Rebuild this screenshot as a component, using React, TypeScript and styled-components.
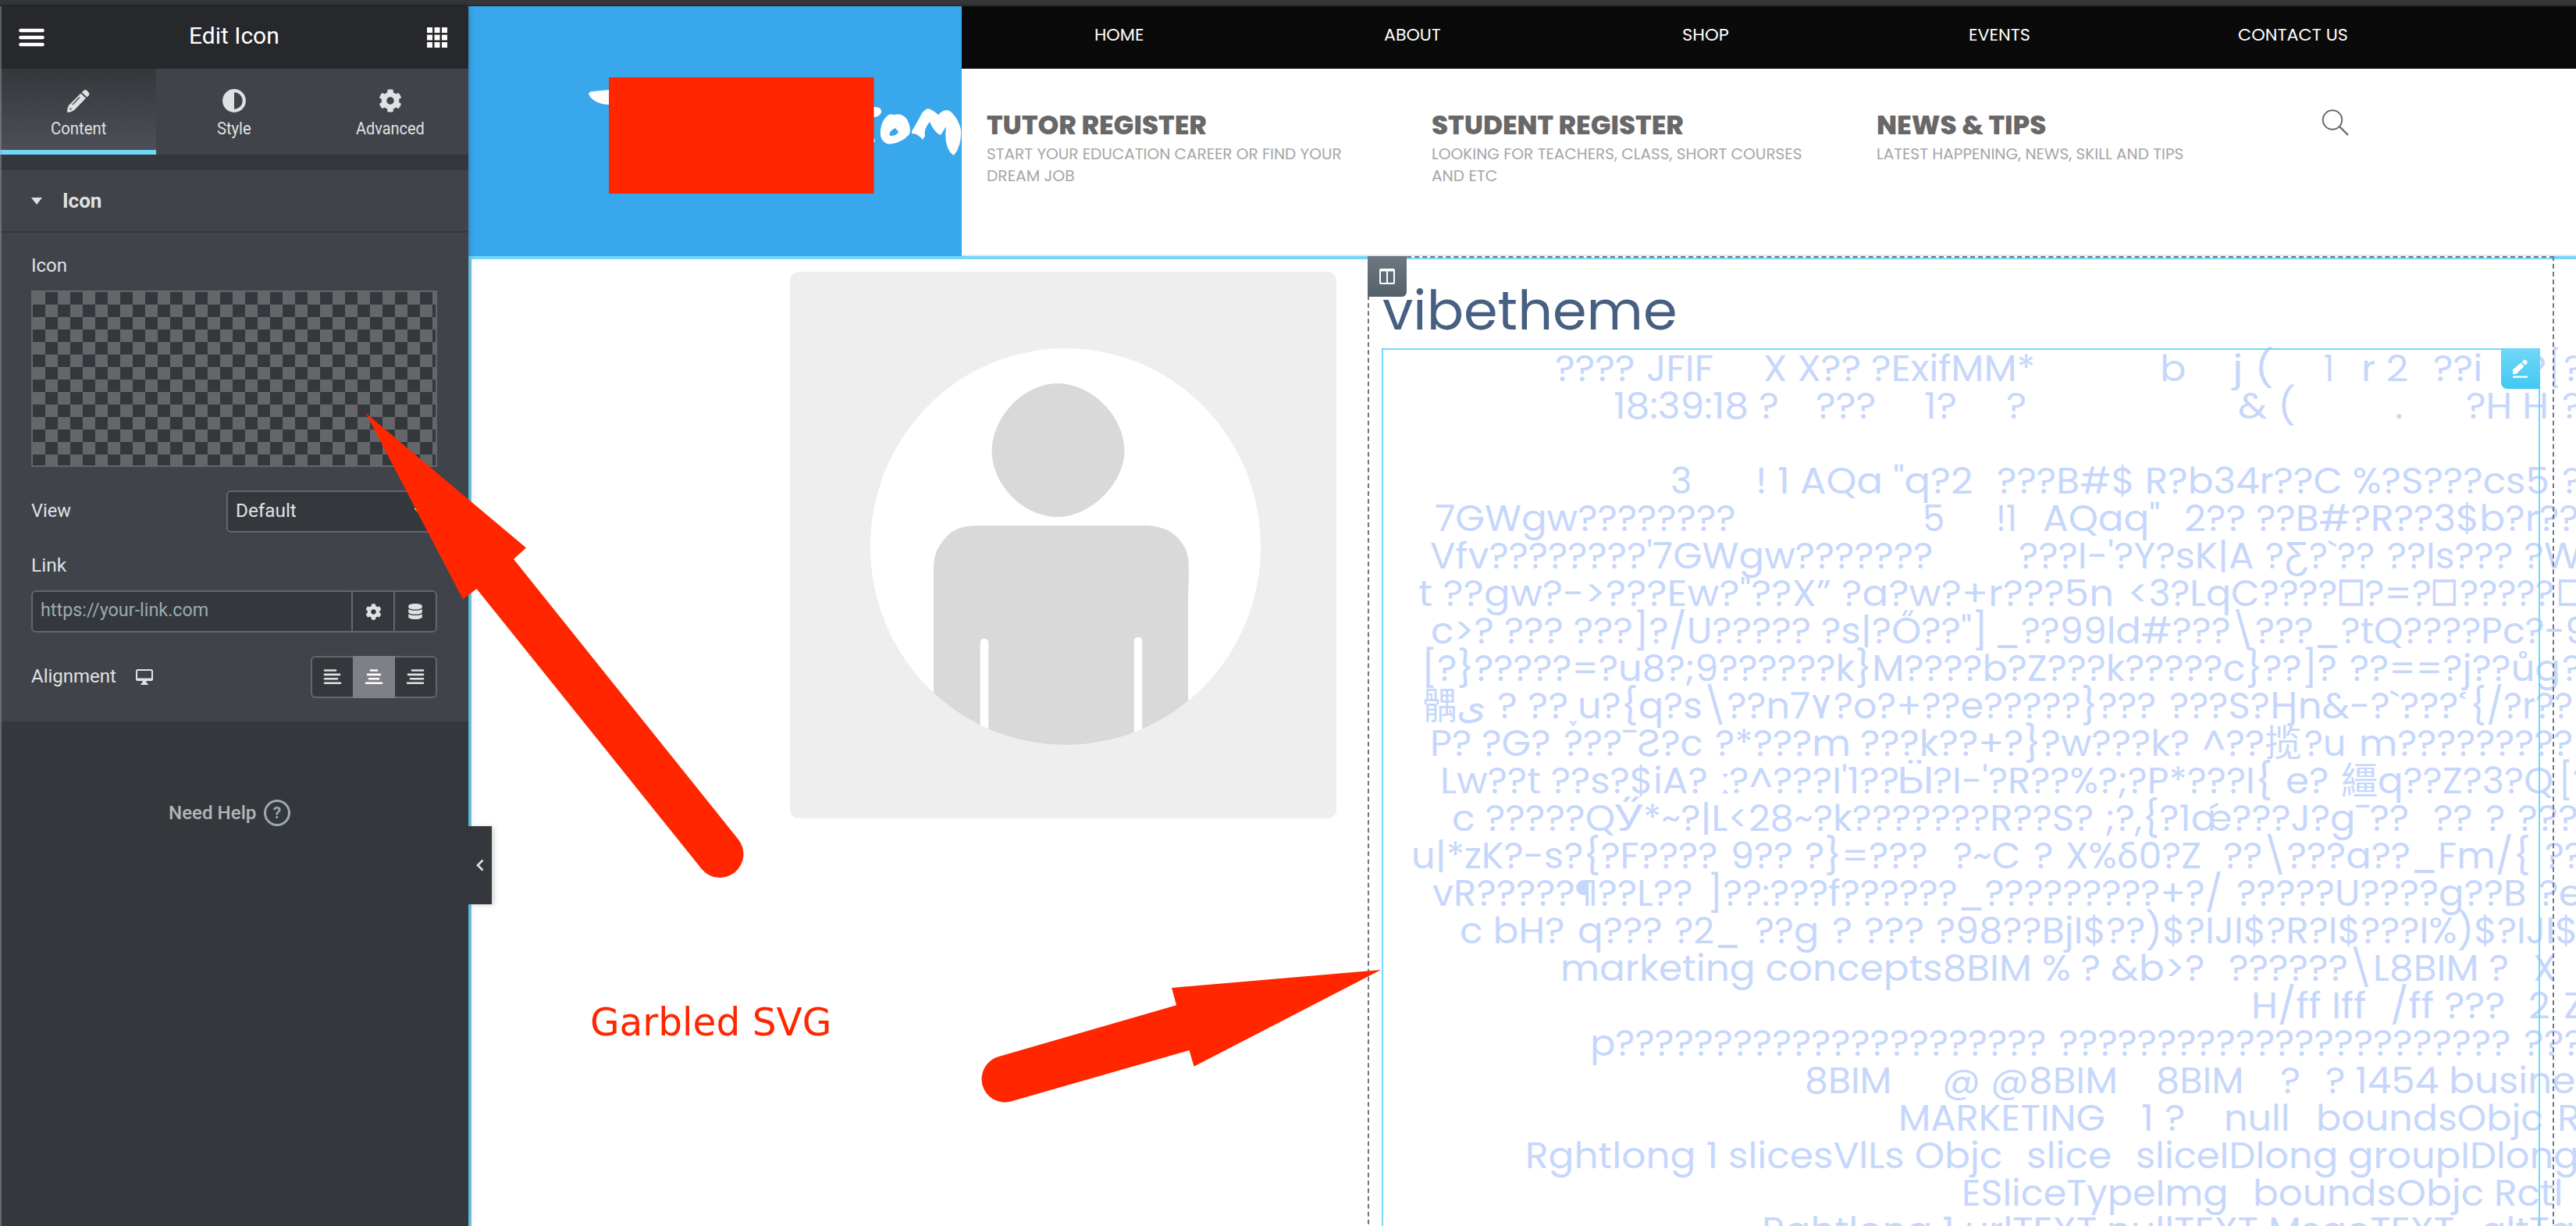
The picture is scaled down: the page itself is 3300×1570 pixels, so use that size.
import React, { useLayoutEffect, useRef, useState } from "react";
import styled, { createGlobalStyle } from "styled-components";
import { FaCog, FaDatabase } from "react-icons/fa";

const GEO = `Poppins, Inter, "Noto Sans", "Noto Sans CJK SC", sans-serif`;
const UI = `Roboto, "Liberation Sans", sans-serif`;

const Global = createGlobalStyle`
  * { box-sizing: border-box; }
  body { margin: 0; background: #fff; }
`;

/* ---------- width-fitted text ---------- */

const FitBox = styled.span<{ $w: number }>`
  display: block;
  flex: none;
  width: ${(p) => p.$w}px;
  white-space: pre;
`;
const FitInner = styled.span`
  display: inline-block;
  transform-origin: 0 50%;
`;

function Fit({ w, children, className }: { w: number; children: string; className?: string }) {
  const ref = useRef<HTMLSpanElement>(null);
  const [scale, setScale] = useState(1);
  useLayoutEffect(() => {
    if (ref.current) setScale(w / ref.current.offsetWidth);
  }, [w, children]);
  return (
    <FitBox $w={w} className={className}>
      <FitInner ref={ref} style={{ transform: `scaleX(${scale})` }}>
        {children}
      </FitInner>
    </FitBox>
  );
}

/* ---------- shell ---------- */

const Page = styled.div`
  position: relative;
  display: flex;
  flex-direction: column;
  width: 3300px;
  height: 1570px;
  overflow: hidden;
`;
const BrowserEdge = styled.div`
  flex: none;
  height: 8px;
  background: #35363a;
  border-bottom: 2px solid #292a2a;
`;
const Body = styled.div`
  display: flex;
  flex: 1;
  min-height: 0;
`;

/* ---------- sidebar ---------- */

const Panel = styled.aside`
  position: relative;
  z-index: 2;
  flex: none;
  width: 600px;
  background: #34383c;
  font-family: ${UI};
  color: #e0e1e3;
  box-shadow: 0 0 8px rgba(0, 0, 0, 0.3);
  &::after {
    content: "";
    position: absolute;
    inset: 0 auto 0 0;
    width: 2px;
    background: rgba(160, 162, 165, 0.45);
  }
`;
const PanelHeader = styled.header`
  display: flex;
  align-items: center;
  justify-content: space-between;
  height: 80px;
  padding: 0 27px 0 24px;
  background: #26282b;
  color: #fff;
  font-size: 30px;
  font-weight: 400;
`;
const HeaderTitle = styled(Fit)`
  line-height: 36px;
  padding-bottom: 4px;
  margin: 0 4px 0 0;
`;
const Tabs = styled.nav`
  display: grid;
  grid-template-columns: repeat(3, 1fr);
  height: 110px;
  margin-bottom: 20px;
`;
const Tab = styled.div<{ $active?: boolean }>`
  display: flex;
  flex-direction: column;
  align-items: center;
  gap: 7px;
  padding-top: 26px;
  font-size: 21.5px;
  line-height: 28px;
  font-weight: 400;
  background: ${(p) => (p.$active ? "linear-gradient(#34383c, #404349 50%, #4c4f57)" : "#404349")};
  border-bottom: 6px solid ${(p) => (p.$active ? "#71d7f7" : "#404349")};
  svg { display: block; }
`;
const SectionTitle = styled.div`
  display: flex;
  align-items: center;
  gap: 26px;
  height: 80px;
  padding: 0 40px;
  background: #404349;
  border-bottom: 2px solid #34383c;
  font-size: 26px;
  font-weight: 700;
`;
const Caret = styled.i`
  border: 7.5px solid transparent;
  border-top: 9px solid #e0e1e3;
  border-bottom: 0;
`;
const Controls = styled.div`
  height: 626px;
  padding: 26px 40px 0;
  background: #404349;
  font-size: 24px;
`;
const Label = styled.div`
  display: flex;
  align-items: center;
  gap: 25px;
  height: 32px;
`;
const Checker = styled.div`
  height: 226px;
  margin-top: 16px;
  border: 2px solid #64666a;
  background: conic-gradient(#34383c 25%, #64666a 0 50%, #34383c 0 75%, #64666a 0) 0 0 / 32px 32px;
`;
const Row = styled.div<{ $top: number }>`
  display: flex;
  align-items: center;
  justify-content: space-between;
  height: 54px;
  margin-top: ${(p) => p.$top}px;
`;
const RowText = styled(Fit)`
  padding-bottom: 2px;
`;
const Select = styled.div`
  display: flex;
  align-items: center;
  justify-content: space-between;
  width: 270px;
  height: 54px;
  padding: 0 12px 3px 10px;
  background: #34383c;
  border: 2px solid #64666a;
  border-radius: 6px;
`;
const LinkLabel = styled(Label)`
  margin: 26px 0 16px;
`;
const Segmented = styled.div`
  display: flex;
  height: 54px;
  background: #34383c;
  border: 2px solid #64666a;
  border-radius: 6px;
`;
const UrlText = styled.div`
  flex: 1;
  padding: 9px 0 0 10px;
  color: #9da9b3;
  line-height: 28px;
`;
const IconCell = styled.div<{ $plain?: boolean; $active?: boolean }>`
  display: flex;
  align-items: center;
  justify-content: center;
  width: ${(p) => (p.$plain ? 52 : 54)}px;
  margin: ${(p) => (p.$active ? "-2px 0" : "0")};
  border-left: ${(p) => (p.$plain || p.$active ? 0 : 2)}px solid #64666a;
  background: ${(p) => (p.$active ? "#7e8085" : "transparent")};
  color: ${(p) => (p.$active ? "#fff" : "#e0e1e3")};
`;
const Help = styled.div`
  display: flex;
  align-items: center;
  gap: 10px;
  margin: 100px 0 0 216px;
  font-size: 23.5px;
  font-weight: 500;
  color: #b4b5b7;
`;
const HelpMark = styled.span`
  display: flex;
  align-items: center;
  justify-content: center;
  width: 34px;
  height: 34px;
  border: 3px solid #9da9b1;
  border-radius: 50%;
  color: #9da9b1;
  font-size: 21px;
  font-weight: 700;
`;
const Collapse = styled.div`
  position: absolute;
  left: 600px;
  top: 1050px;
  display: flex;
  align-items: center;
  justify-content: center;
  width: 30px;
  height: 100px;
  background: #34383c;
  box-shadow: 3px 1px 6px rgba(0, 0, 0, 0.18);
`;

const ALIGN = {
  left: [[0, 16], [0, 21], [0, 18], [0, 22]],
  center: [[6, 16], [2, 20], [4, 18], [0, 22]],
  right: [[6, 22], [1, 22], [4, 22], [0, 22]],
};
const AlignIcon = ({ kind }: { kind: keyof typeof ALIGN }) => (
  <svg width="24" height="22" viewBox="-1 0 24 22" stroke="currentColor" strokeWidth="2.6" strokeLinecap="round">
    {ALIGN[kind].map(([a, b], i) => (
      <path key={i} d={`M${a + 1} ${2.5 + i * 5.4}H${b - 1}`} />
    ))}
  </svg>
);

function Sidebar() {
  return (
    <Panel>
      <PanelHeader>
        <svg width="33" height="24" stroke="#fff" strokeWidth="4.6" strokeLinecap="round">
          <path d="M2.5 3H30.5M2.5 12H30.5M2.5 21H30.5" />
        </svg>
        <HeaderTitle w={116}>Edit Icon</HeaderTitle>
        <svg width="26" height="26" fill="#fff">
          {[0, 9.5, 19].map((y) => [0, 9.5, 19].map((x) => <rect key={`${x}-${y}`} x={x} y={y} width="7" height="7" />))}
        </svg>
      </PanelHeader>
      <Tabs>
        <Tab $active>
          <svg width="30" height="30" viewBox="0 0 30 30" fill="#e0e1e3">
            <path d="M18.5 5.5 25 11.8 10 27.2Q6 29.6 1 30 .6 25 3 21z" />
            <path d="M19.8 4.3 22 2Q24.3 0 26.5 2L28.5 4.2Q30.2 6.3 28.5 8.500L26.3 10.6z" />
            <path d="M8 20 17 10.5M4.5 24.5 6.5 26.5" stroke="#3d4046" strokeWidth="1.3" />
          </svg>
          <Fit w={71}>Content</Fit>
        </Tab>
        <Tab>
          <svg width="30" height="30" viewBox="0 0 30 30">
            <circle cx="15" cy="15" r="12.8" fill="none" stroke="#e0e1e3" strokeWidth="4.2" />
            <path d="M15 1A14 14 0 0 0 15 29z" fill="#e0e1e3" />
          </svg>
          <Fit w={44}>Style</Fit>
        </Tab>
        <Tab>
          <FaCog size={30} />
          <Fit w={88}>Advanced</Fit>
        </Tab>
      </Tabs>
      <SectionTitle>
        <Caret />
        <Fit w={50}>Icon</Fit>
      </SectionTitle>
      <Controls>
        <Label>
          <Fit w={46}>Icon</Fit>
        </Label>
        <Checker />
        <Row $top={30}>
          <RowText w={51}>View</RowText>
          <Select>
            <Fit w={78}>Default</Fit>
            <svg width="16" height="10" fill="none" stroke="#e0e1e3" strokeWidth="2.5">
              <path d="M1.5 1.5 8 8 14.5 1.5" />
            </svg>
          </Select>
        </Row>
        <LinkLabel>
          <Fit w={45}>Link</Fit>
        </LinkLabel>
        <Segmented>
          <UrlText>
            <Fit w={215}>https://your-link.com</Fit>
          </UrlText>
          <IconCell>
            <FaCog size={21} />
          </IconCell>
          <IconCell>
            <FaDatabase size={20} />
          </IconCell>
        </Segmented>
        <Row $top={30}>
          <Label>
            <RowText w={109}>Alignment</RowText>
            <svg width="22" height="22" viewBox="0 0 22 22" fill="none" stroke="#e0e1e3" strokeWidth="2">
              <rect x="1" y="2" width="20" height="13" rx="1.5" />
              <path d="M1 14H21" strokeWidth="3" />
              <path d="M9 15h4l1 4h1.5v2h-9v-2H8z" fill="#e0e1e3" stroke="none" />
            </svg>
          </Label>
          <Segmented>
            <IconCell $plain>
              <AlignIcon kind="left" />
            </IconCell>
            <IconCell $active>
              <AlignIcon kind="center" />
            </IconCell>
            <IconCell $plain>
              <AlignIcon kind="right" />
            </IconCell>
          </Segmented>
        </Row>
      </Controls>
      <Help>
        <Fit w={112}>Need Help</Fit>
        <HelpMark>?</HelpMark>
      </Help>
      <Collapse>
        <svg width="10" height="16" fill="none" stroke="#e0e1e3" strokeWidth="2.6">
          <path d="M8.5 1.5 2 8 8.5 14.5" />
        </svg>
      </Collapse>
    </Panel>
  );
}

/* ---------- site header ---------- */

const Preview = styled.main`
  flex: 1;
  min-width: 0;
  font-family: ${GEO};
  font-feature-settings: "cv11", "calt" 0;
`;
const SiteHeader = styled.header`
  display: flex;
  height: 320px;
`;
const Logo = styled.div`
  flex: none;
  width: 632px;
  background: #38a7eb;
  svg { display: block; }
`;
const HeaderMain = styled.div`
  flex: 1;
  border-bottom: 2px solid #e8e9ef;
`;
const MainNav = styled.nav`
  display: grid;
  grid-template-columns: repeat(5, 376px);
  justify-items: center;
  height: 80px;
  padding: 20px 0 0 13px;
  background: #0a0a0a;
  color: #fff;
  font-size: 21.5px;
  line-height: 34px;
`;
const Promos = styled.div`
  display: grid;
  grid-template-columns: repeat(3, 570px) 1fr;
  padding: 51px 0 0 32px;
`;
const Promo = styled.div`
  padding-top: 1px;
  font-size: 19px;
  line-height: 28px;
  color: #a6a6a6;
`;
const PromoTitle = styled(Fit)`
  font-size: 33.5px;
  line-height: 42px;
  font-weight: 800;
  color: #686868;
  margin-bottom: 2px;
`;

const NAV: [string, number][] = [
  ["HOME", 63],
  ["ABOUT", 73],
  ["SHOP", 60],
  ["EVENTS", 79],
  ["CONTACT US", 141],
];
const PROMOS: { title: [string, number]; lines: [string, number][] }[] = [
  { title: ["TUTOR REGISTER", 282], lines: [["START YOUR EDUCATION CAREER OR FIND YOUR", 455], ["DREAM JOB", 113]] },
  { title: ["STUDENT REGISTER", 323], lines: [["LOOKING FOR TEACHERS, CLASS, SHORT COURSES", 474], ["AND ETC", 84]] },
  { title: ["NEWS & TIPS", 218], lines: [["LATEST HAPPENING, NEWS, SKILL AND TIPS", 393]] },
];

/* ---------- page section ---------- */

const Section = styled.section`
  display: flex;
  gap: 40px;
  height: 1242px;
  padding-left: 408px;
  border-top: 4px solid #73d7f7;
  border-left: 4px solid #6fd0f0;
`;
const Avatar = styled.div`
  flex: none;
  width: 700px;
  height: 700px;
  margin-top: 16px;
  background: #eeeeee;
  border-radius: 11px;
  overflow: hidden;
  svg { display: block; }
`;
const Column = styled.div`
  position: relative;
  flex: none;
  width: 1520px;
  height: 1300px;
  margin-top: -4px;
  padding: 2px 18px 0;
  background: linear-gradient(#fff 0 2px, #73d7f7 2px 4px, transparent 4px);
  &::after {
    content: "";
    position: absolute;
    inset: 0;
    border: 2px dashed #6d7882;
  }
`;
const ColumnHandle = styled.div`
  position: absolute;
  left: 0;
  top: 0;
  z-index: 1;
  display: flex;
  align-items: center;
  justify-content: center;
  width: 50px;
  height: 52px;
  background: linear-gradient(#6d7882, #556068);
  border-bottom-right-radius: 6px;
`;
const Heading = styled.h2`
  position: relative;
  z-index: 2;
  height: 116px;
  margin: 0;
  padding: 33px 0 0 1px;
  color: #475f80;
  font-size: 70px;
  line-height: 70px;
  font-weight: 400;
`;
const Widget = styled.div`
  position: relative;
  height: 1300px;
  padding: 2px 2px 0;
  &::after {
    content: "";
    position: absolute;
    inset: 0;
    border: 2px solid #73d7f7;
  }
`;
const EditButton = styled.div`
  position: absolute;
  top: 0;
  right: 0;
  z-index: 1;
  display: flex;
  align-items: center;
  justify-content: center;
  width: 50px;
  height: 52px;
  background: linear-gradient(#71d7f7, #42c8f2);
  border-bottom-left-radius: 8px;
`;
const GarbledLine = styled.div`
  display: flex;
  height: 48px;
  direction: ltr;
  unicode-bidi: bidi-override;
  font-size: 46.5px;
  line-height: 48px;
  color: #c6d7fb;
`;
const Gap = styled.i<{ $w: number }>`
  flex: none;
  width: ${(p) => Math.max(p.$w, 0)}px;
  margin-right: ${(p) => Math.min(p.$w, 0)}px;
`;

/* Each run is [left edge, right edge, text] on the page's horizontal axis. */
type Run = [number, number, string];
const ORIGIN = 1772;
const BEARING = 2;
const LINES: Run[][] = [
  [[1994, 2092, "????"], [2111, 2193, "JFIF"], [2261, 2605, "X X?? ?ExifMM*"], [2769, 2798, "b"], [2862, 2911, "j ("], [2979, 2988, "1"], [3027, 3084, "r 2"], [3119, 3178, "??i"], [3237, 3260, "?"], [3269, 3278, "["], [3286, 3308, "?"]],
  [[2069, 2277, "18:39:18 ?"], [2328, 2401, "???"], [2467, 2505, "1?"], [2572, 2594, "?"], [2869, 2939, "& ("], [3070, 3077, "."], [3161, 3263, "?H H"], [3284, 3306, "?"]],
  [],
  [[2142, 2165, "3"], [2251, 2526, "! 1 AQa \"q?2"], [2560, 3264, "???B#$ R?b34r??C %?S???cs5"], [3284, 3306, "?"]],
  [[1840, 2221, "7GWgw????????"], [2465, 2489, "5"], [2559, 2582, "!1"], [2619, 2765, "AQaq\""], [2800, 3302, "2?? ??B#?R??3$b?r??"]],
  [[1834, 2474, "Vfv????????'7GWgw???????"], [2588, 2885, "???I-'?Y?sK|A"], [2904, 3040, "?Ƹ?`??"], [3060, 3218, "??Is???"], [3235, 3306, "?W"]],
  [[1819, 2706, "t ??gw?->???Ew?\"??X” ?a?w?+r???5n"], [2728, 2992, "<3?LqC????"], [2995, 3029, "□"], [3031, 3113, "?=?"], [3115, 3148, "□"], [3153, 3270, "?????"], [3276, 3310, "□"]],
  [[1835, 2545, "c>? ??? ???]?/U????? ?s|?Ő??\"]"], [2556, 3314, "_??99ld#???\\???_?tQ????Pc?-9"]],
  [[1823, 2992, "[?}?????=?u8?;9??????k}M????b?Z???k?????c}??]?"], [3012, 3278, "??==?j??ůg"], [3284, 3306, "?"]],
  [[1824, 1865, "髃"], [1868, 1902, "ى"], [1920, 2008, "? ??"], [2010, 2020, "ˬ"], [2023, 2317, "u?{q?s\\??n7"], [2322, 2344, "٧"], [2351, 2760, "?o?+??e?????}???"], [2781, 3147, "???S?Ӈn&-?`???"], [3150, 3159, "ʿ"], [3166, 3294, "{/?r??"]],
  [[1834, 1985, "P? ?G?"], [2005, 2180, "???ˉƧ?c"], [2199, 2369, "?*???m"], [2385, 2803, "???k??+?}?w???k?"], [2823, 2899, "^??"], [2903, 2947, "揽"], [2954, 3003, "?u"], [3024, 3294, "m?????????"]],
  [[1847, 2186, "Lw??t ??s?$iA?"], [2205, 2216, "ː"], [2217, 2431, "?^???I'1??"], [2432, 2476, "Ӹ"], [2478, 2909, "?I-'?R??%?;?P*???I{"], [2930, 2981, "e?"], [3001, 3045, "繮"], [3048, 3269, "q??Z?3?Q"], [3280, 3316, "[?"]],
  [[1862, 2067, "c ?????Q"], [2069, 2104, "Ӳ"], [2107, 2680, "*~?|L<28~?k???????R??S?"], [2699, 3084, ";?,{?1ǽ???J?gˉ??"], [3119, 3166, "??"], [3186, 3207, "?"], [3227, 3301, "???"]],
  [[1810, 2198, "u|*zK?-s?{?F????"], [2219, 2295, "9??"], [2314, 2468, "?}=???"], [2504, 2586, "?~C"], [2607, 2628, "?"], [2648, 2818, "X%δ0?Z"], [2850, 3240, "??\\???a??_Fm/{"], [3262, 3308, "??"]],
  [[1837, 2166, "vR?????¶??L??"], [2189, 2846, "]??:???f??????_?????????+?/"], [2867, 3234, "?????U????g??B"], [3254, 3306, "?e"]],
  [[1872, 2003, "c bH?"], [2023, 2128, "q???"], [2147, 2228, "?2_"], [2250, 2328, "??g"], [2349, 2371, "?"], [2390, 2463, "???"], [2482, 3301, "?98??BjI$??)$?IJI$?R?I$???I%)$?IJI$"]],
  [[2001, 2822, "marketing concepts8BIM % ? &b>?"], [2857, 3212, "??????\\L8BIM ?"], [3247, 3273, "X"]],
  [[2886, 3029, "H/ff Iff"], [3064, 3207, "/ff ???"], [3241, 3265, "2"], [3286, 3310, "Z"]],
  [[2039, 2620, "p??????????????????????"], [2639, 3214, "???????????????????????"], [3235, 3308, "???"]],
  [[2314, 2421, "8BIM"], [2490, 2711, "@ @8BIM"], [2764, 2872, "8BIM"], [2923, 2945, "?"], [2981, 3297, "? 1454 busine"]],
  [[2434, 2695, "MARKETING"], [2745, 2798, "1 ?"], [2851, 2931, "null"], [2969, 3256, "boundsObjc"], [3278, 3304, "R"]],
  [[1956, 2563, "Rghtlong 1 slicesVlLs Objc"], [2598, 2703, "slice"], [2738, 3302, "sliceIDlong groupIDlong"]],
  [[2515, 2852, "ESliceTypeImg"], [2888, 3281, "boundsObjc Rctl"]],
  [[2259, 3142, "Rghtlong 1 urlTEXT nullTEXT MsgeTEXT"], [3180, 3296, "altTa"]],
];

function Garbled({ runs }: { runs: Run[] }) {
  let cursor = ORIGIN;
  return (
    <GarbledLine>
      {runs.map(([from, to, text], i) => {
        const gap = from - BEARING - cursor;
        cursor = to + BEARING;
        return (
          <React.Fragment key={i}>
            <Gap $w={gap} />
            <Fit w={to - from + BEARING * 2}>{text}</Fit>
          </React.Fragment>
        );
      })}
    </GarbledLine>
  );
}

/* ---------- annotations ---------- */

const Notes = styled.div`
  position: absolute;
  inset: 0;
  z-index: 5;
  color: #ff2600;
  svg { display: block; }
`;
const NoteText = styled.div`
  position: absolute;
  left: 756px;
  top: 1280px;
  font-family: Verdana, "DejaVu Sans", sans-serif;
  font-size: 49px;
  line-height: 60px;
`;

export default function App() {
  return (
    <Page>
      <Global />
      <BrowserEdge />
      <Body>
        <Sidebar />
        <Preview>
          <SiteHeader>
            <Logo>
              <svg width="632" height="320" fill="#fff">
                <path d="M154 112Q155 109 160 109L181 107V126Q167 126 159 119Q155 116 154 112z" />
                <path d="M519 129Q530 128 529 136Q526 142 519 142zM519 169Q523 172 519 175z" />
                <path
                  fillRule="evenodd"
                  d="M536 141Q539 137 545 139Q556 136 562 145Q568 156 565 164Q556 174 543 176Q536 178 531 172Q527 168 528 158Q530 146 536 141zM547 156Q538 160 540 166Q549 166 551 161z"
                />
                <path d="M568 160Q576 147 581 137Q587 129 592 132Q598 135 602 139Q612 128 620 137Q628 145 631 158Q632 171 627 183L625 181Q628 184 626 185L622 191L617 187Q609 175 612 154L605 165Q597 162 591 148Q583 158 585 166L582 171Q575 162 568 163z" />
              </svg>
            </Logo>
            <HeaderMain>
              <MainNav>
                {NAV.map(([t, w]) => (
                  <Fit key={t} w={w}>{t}</Fit>
                ))}
              </MainNav>
              <Promos>
                {PROMOS.map((p) => (
                  <Promo key={p.title[0]}>
                    <PromoTitle w={p.title[1]}>{p.title[0]}</PromoTitle>
                    {p.lines.map(([t, w]) => (
                      <Fit key={t} w={w}>{t}</Fit>
                    ))}
                  </Promo>
                ))}
                <svg width="36" height="36" viewBox="-1 -1 36 36" fill="none" stroke="#6a6a6a" strokeWidth="2">
                  <circle cx="13" cy="13.5" r="12.2" />
                  <path d="M22 22 33 33" strokeWidth="2.4" />
                </svg>
              </Promos>
            </HeaderMain>
          </SiteHeader>
          <Section>
            <Avatar>
              <svg width="700" height="700">
                <defs>
                  <clipPath id="disc">
                    <ellipse cx="353" cy="352" rx="250" ry="254" />
                  </clipPath>
                </defs>
                <ellipse cx="353" cy="352" rx="250" ry="254" fill="#fff" />
                <g clipPath="url(#disc)">
                  <path
                    fill="#d9d9d9"
                    d="M343 143C384 143 428 182 428.5 230C428 272 384 314 343 314C298 314 259 272 258.5 230C259 185 300 143 343 143z"
                  />
                  <path
                    fill="#d9d9d9"
                    d="M184 700V384C184 364 187 356 196 345C206 331 217 326 238 325H457C478 326 491 332 501 346C510 358 511 366 511 385L510 420V700z"
                  />
                  <path d="M249 475V700M446 473V700" stroke="#fff" strokeWidth="10.5" strokeLinecap="round" />
                </g>
              </svg>
            </Avatar>
            <Column>
              <ColumnHandle>
                <svg width="20" height="20" fill="none" stroke="#fff" strokeWidth="2">
                  <rect x="1" y="1" width="18" height="18" rx="1" />
                  <path d="M10 1V19" />
                  <path d="M1 2H19" strokeWidth="3" />
                </svg>
              </ColumnHandle>
              <Heading>
                <Fit w={377}>vibetheme</Fit>
              </Heading>
              <Widget>
                {LINES.map((runs, i) => (
                  <Garbled key={i} runs={runs} />
                ))}
                <EditButton>
                  <svg width="22" height="24" viewBox="0 0 22 24" fill="#fff">
                    <path d="M1 19V13.5L11.5 4.5 15.5 9 5.5 19zM12.8 3.3 15.5 1Q17 0 18.5 1.5 20.5 4 19 5.8L16.8 7.8z" />
                    <path d="M1 21.5H20V23.7H1z" />
                  </svg>
                </EditButton>
              </Widget>
            </Column>
          </Section>
        </Preview>
      </Body>
      <Notes>
        <svg width="3300" height="1570" fill="#ff2600">
          <rect x="780" y="99" width="339.5" height="149" />
          <path d="M468.5 529 674 701.5 658 716 945.5 1074.5A30 30 0 0 1 899 1113L610.5 754 593 767.5z" />
          <path d="M1769 1242 1529.5 1365.7 1523.5 1345 1295 1410.5A29.5 29.5 0 0 1 1279.5 1353L1507 1287.3 1501 1265z" />
        </svg>
        <NoteText>
          <Fit w={309}>Garbled SVG</Fit>
        </NoteText>
      </Notes>
    </Page>
  );
}
